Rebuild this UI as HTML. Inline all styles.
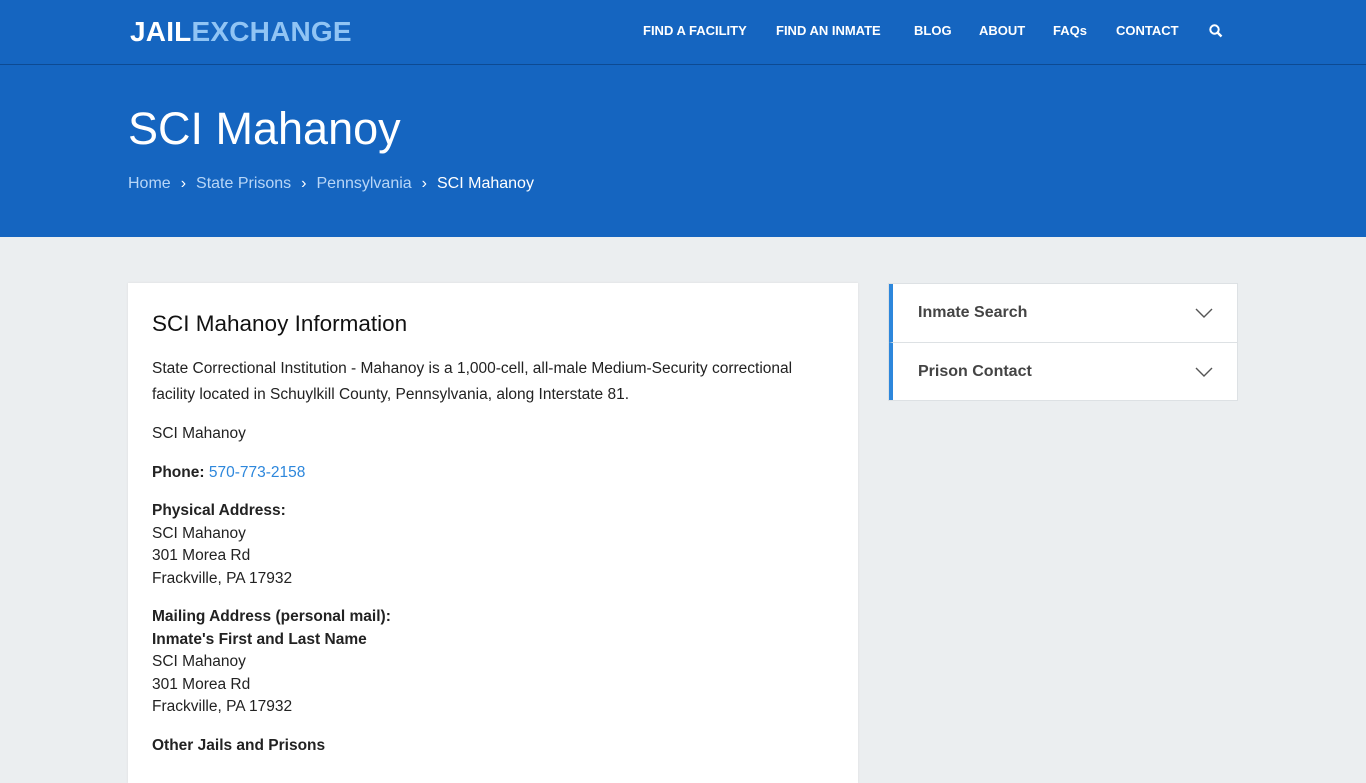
<!DOCTYPE html>
<html><head><meta charset="utf-8"><style>
*{margin:0;padding:0;box-sizing:border-box}
html,body{width:1366px;height:768px;overflow:hidden}
body{background:#ebeef0;font-family:"Liberation Sans",sans-serif;color:#222}
.top{position:absolute;left:0;top:0;width:1366px;height:65px;background:#1565c0;border-bottom:1px solid #0d4a92}
.logo{position:absolute;left:130px;top:16px;font-size:28px;font-weight:bold;letter-spacing:0.2px;color:#fff}
.logo span{color:#90c4f4}
.nav{position:absolute;top:23px;font-size:13px;font-weight:bold;color:#fff}
.hero{position:absolute;top:65px;left:0;width:1366px;height:172px;background:#1565c0}
h1{position:absolute;left:128px;top:38px;font-size:45px;font-weight:normal;color:#fff}
.bc{position:absolute;left:128px;top:110px;font-size:16px;color:#b8d6f7}
.bc b{font-weight:normal;color:#fff}
.bc i{font-style:normal;margin:0 10px;color:#fff}
.card{position:absolute;left:128px;top:283px;width:730px;height:500px;background:#fff;box-shadow:0 0 2px #ddd;padding:0 24px}
.card h2{font-size:22.5px;font-weight:normal;color:#111;margin-top:28px}
.card p{font-size:15.5px;line-height:22.5px;color:#222}
.side{position:absolute;left:888px;top:283px;width:350px;background:#fff;border:1px solid #dde1e4}
.item{height:58px;border-left:4px solid #2d87dc;position:relative;font-size:16px;font-weight:bold;color:#444;padding:20px 0 0 25px}
.item+.item{border-top:1px solid #dde1e4}
.item svg{position:absolute;right:24px;top:24px}
a{color:#2d87dc;text-decoration:none}
</style></head><body>
<div class="top">
<div class="logo">JAIL<span>EXCHANGE</span></div>
<div class="nav" style="left:643px">FIND A FACILITY</div>
<div class="nav" style="left:776px">FIND AN INMATE</div>
<div class="nav" style="left:914px">BLOG</div>
<div class="nav" style="left:979px">ABOUT</div>
<div class="nav" style="left:1053px">FAQs</div>
<div class="nav" style="left:1116px">CONTACT</div>
<svg style="position:absolute;left:1209px;top:24px" width="14" height="14" viewBox="0 0 14 14"><circle cx="5.5" cy="5.5" r="4.2" stroke="#fff" stroke-width="2" fill="none"/><line x1="8.5" y1="8.5" x2="12.5" y2="12.5" stroke="#fff" stroke-width="2.4"/></svg>
</div>
<div class="hero">
<h1>SCI Mahanoy</h1>
<div class="bc">Home<i>›</i>State Prisons<i>›</i>Pennsylvania<i>›</i><b>SCI Mahanoy</b></div>
</div>
<div class="card">
<h2>SCI Mahanoy Information</h2>
<p style="margin-top:19px;line-height:26px">State Correctional Institution - Mahanoy is a 1,000-cell, all-male Medium-Security correctional facility located in Schuylkill County, Pennsylvania, along Interstate 81.</p>
<p style="margin-top:15px">SCI Mahanoy</p>
<p style="margin-top:16px"><b>Phone:</b> <a>570-773-2158</a></p>
<p style="margin-top:16px"><b>Physical Address:</b><br>SCI Mahanoy<br>301 Morea Rd<br>Frackville, PA 17932</p>
<p style="margin-top:16px"><b>Mailing Address (personal mail):<br>Inmate's First and Last Name</b><br>SCI Mahanoy<br>301 Morea Rd<br>Frackville, PA 17932</p>
<p style="margin-top:16px"><b>Other Jails and Prisons</b></p>
</div>
<div class="side">
<div class="item">Inmate Search<svg width="18" height="10" viewBox="0 0 18 10"><path d="M1 1l8 8 8-8" stroke="#555" stroke-width="1.4" fill="none"/></svg></div>
<div class="item">Prison Contact<svg width="18" height="10" viewBox="0 0 18 10"><path d="M1 1l8 8 8-8" stroke="#555" stroke-width="1.4" fill="none"/></svg></div>
</div>
</body></html>
